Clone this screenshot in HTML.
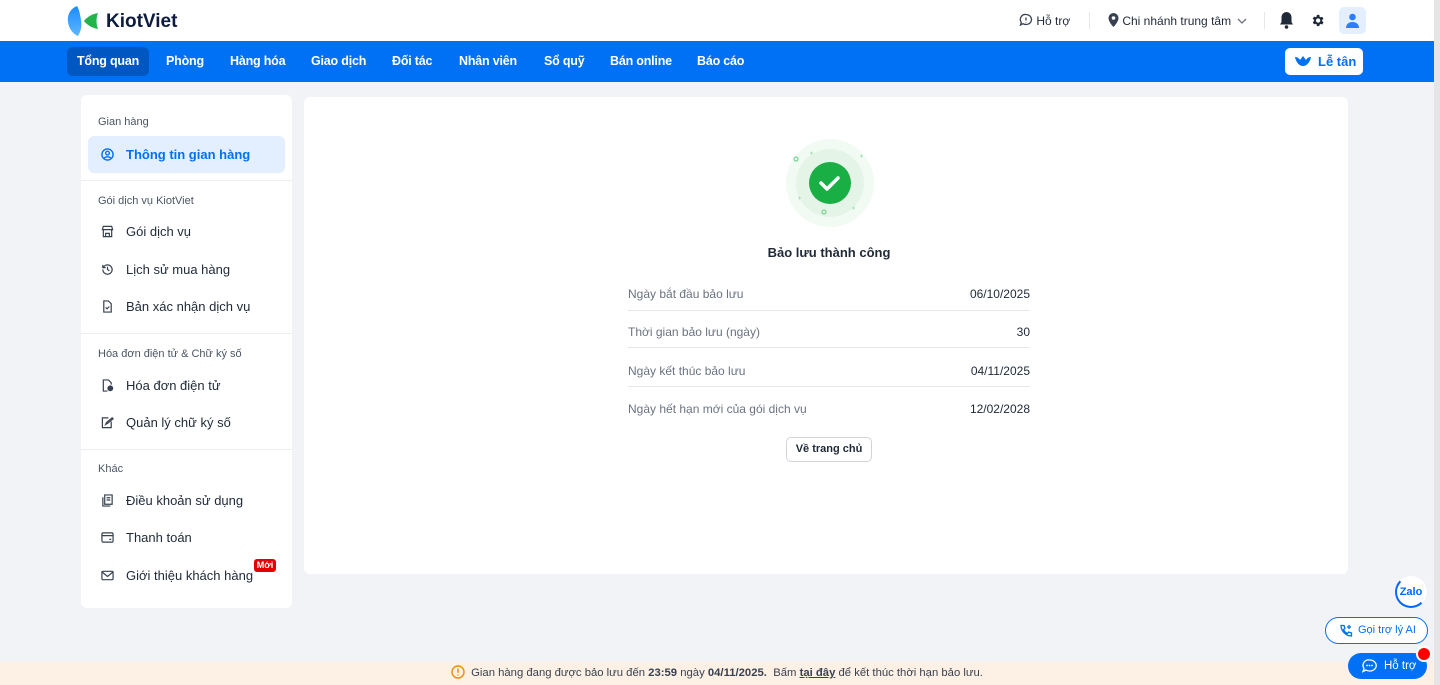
<!DOCTYPE html>
<html><head><meta charset="utf-8"><style>
*{box-sizing:border-box;margin:0;padding:0}
body{width:1440px;height:685px;overflow:hidden;background:#f2f3f6;font-family:"Liberation Sans",sans-serif;position:relative;color:#1f2937}
.top{position:absolute;left:0;top:0;width:1434px;height:41px;background:#fff}
.nav{position:absolute;left:0;top:41px;width:1434px;height:41px;background:#0070f4}
.nav a{position:absolute;top:6px;height:29px;line-height:29px;color:#fff;font-weight:bold;font-size:12.5px;padding:0 10px;border-radius:6px;letter-spacing:-0.2px}
.sb{position:absolute;right:0;top:0;width:6px;height:685px;background:#e5e5e5}
.side{position:absolute;left:81px;top:95px;width:211px;height:513px;background:#fff;border-radius:6px}
.sec{position:absolute;left:17px;font-size:11px;color:#4b5563}
.it{position:absolute;left:7px;width:197px;height:37px;line-height:37px;font-size:13px;color:#1f2937;padding-left:38px}
.it svg{position:absolute;left:13px;top:12px}
.hr{position:absolute;left:0;width:211px;height:1px;background:#eceef1}
.main{position:absolute;left:304px;top:97px;width:1044px;height:477px;background:#fff;border-radius:6px}
.row{position:absolute;left:324px;width:402px;font-size:12px;color:#6b7280}
.row b{position:absolute;right:0;top:0;font-weight:normal;color:#1f2937}
.ln{position:absolute;left:324px;width:402px;height:1px;background:#e5e7eb}
</style></head><body>
<div class="top">
 <svg style="position:absolute;left:67px;top:6px" width="32" height="30" viewBox="0 0 32 30"><defs><linearGradient id="g" x1="0" y1="0" x2="0" y2="1"><stop offset="0" stop-color="#1a8cff"/><stop offset="1" stop-color="#5fb6ff"/></linearGradient></defs><path d="M10 0C3 3 0 9 1 16c1 7 5 12 10 14 3-5 4-10 3-16C13 8 12 3 10 0z" fill="url(#g)"/><path d="M31 7c-6 1-11 4-14 8 3 4 8 7 14 8-2-5-2-11 0-16z" fill="#22b34b"/></svg>
 <div style="position:absolute;left:106px;top:11px;font-size:19px;font-weight:bold;color:#0d1b3e">KiotViet</div>
 <div style="position:absolute;left:1019px;top:13px;font-size:12px;color:#1f2937">
  <svg width="14" height="14" viewBox="0 0 14 14" style="vertical-align:-2px"><path d="M7 1.5a5.5 5 0 1 1-3 9.2L1.5 12l.8-2.6A5 5 0 0 1 7 1.5z" fill="none" stroke="#374151" stroke-width="1.3"/><path d="M7 4.5v3M7 9v.5" stroke="#374151" stroke-width="1.3"/></svg> Hỗ trợ</div>
 <div style="position:absolute;left:1089px;top:12px;width:1px;height:17px;background:#e5e7eb"></div>
 <div style="position:absolute;left:1108px;top:13px;font-size:12px;color:#1f2937">
  <svg width="11" height="14" viewBox="0 0 11 14" style="vertical-align:-2px"><path d="M5.5 0A5 5 0 0 0 .5 5c0 4 5 9 5 9s5-5 5-9a5 5 0 0 0-5-5z" fill="#374151"/><circle cx="5.5" cy="5" r="1.8" fill="#fff"/></svg> Chi nhánh trung tâm
  <svg width="10" height="8" viewBox="0 0 10 8" style="margin-left:3px"><path d="M1 2l4 4 4-4" fill="none" stroke="#6b7280" stroke-width="1.3"/></svg></div>
 <div style="position:absolute;left:1264px;top:12px;width:1px;height:17px;background:#e5e7eb"></div>
 <svg style="position:absolute;left:1279px;top:11px" width="15" height="18" viewBox="0 0 15 18"><path d="M7.5 1a5 5 0 0 0-5 5v5l-1.5 2.5h13L12.5 11V6a5 5 0 0 0-5-5z" fill="#1f2937"/><circle cx="7.5" cy="16" r="1.8" fill="#1f2937"/></svg>
 <svg style="position:absolute;left:1310px;top:13px" width="15" height="15" viewBox="0 0 24 24"><path fill="#1f2937" d="M19.4 13a7.5 7.5 0 0 0 0-2l2.1-1.6-2-3.5-2.5 1a7.6 7.6 0 0 0-1.7-1L15 3h-4l-.4 2.7a7.6 7.6 0 0 0-1.7 1l-2.5-1-2 3.5L6.5 11a7.5 7.5 0 0 0 0 2l-2.1 1.6 2 3.5 2.5-1a7.6 7.6 0 0 0 1.7 1L11 21h4l.4-2.7a7.6 7.6 0 0 0 1.7-1l2.5 1 2-3.5zM13 15.5a3.5 3.5 0 1 1 0-7 3.5 3.5 0 0 1 0 7z"/></svg>
 <div style="position:absolute;left:1339px;top:7px;width:27px;height:27px;background:#e3efff;border-radius:5px"><svg style="position:absolute;left:7px;top:6px" width="13" height="15" viewBox="0 0 13 15"><circle cx="6.5" cy="4" r="3.3" fill="#2b7fff"/><path d="M0 15c0-4 3-6 6.5-6S13 11 13 15z" fill="#2b7fff"/></svg></div>
</div>
<div class="nav">
 <a style="left:67px;width:82px;text-align:center;padding:0;background:#0057c2">Tổng quan</a>
 <a style="left:156px">Phòng</a>
 <a style="left:220px">Hàng hóa</a>
 <a style="left:301px">Giao dịch</a>
 <a style="left:382px">Đối tác</a>
 <a style="left:449px">Nhân viên</a>
 <a style="left:534px">Sổ quỹ</a>
 <a style="left:600px">Bán online</a>
 <a style="left:687px">Báo cáo</a>
 <div style="position:absolute;left:1285px;top:7px;width:78px;height:27px;background:#fff;border-radius:5px;color:#0070f4;font-weight:bold;font-size:13px;line-height:27px;padding-left:33px"><svg style="position:absolute;left:10px;top:7px" width="16" height="12" viewBox="0 0 16 12"><path d="M0 2c2 0 4 1 5 3L8 1l3 4c1-2 3-3 5-3-1 5-4 9-8 9S1 7 0 2z" fill="#0070f4"/></svg>Lễ tân</div>
</div>
<div class="sb"></div>

<div class="side">
 <div class="sec" style="top:21px">Gian hàng</div>
 <div class="it" style="top:41px;background:#e3efff;border-radius:6px;color:#0070f4;font-weight:bold"><svg width="13" height="13" viewBox="0 0 14 14"><circle cx="7" cy="7" r="6" fill="none" stroke="#0070f4" stroke-width="1.5"/><circle cx="7" cy="5.5" r="2" fill="none" stroke="#0070f4" stroke-width="1.4"/><path d="M3.5 11c1-2 6-2 7 0" fill="none" stroke="#0070f4" stroke-width="1.4"/></svg>Thông tin gian hàng</div>
 <div class="hr" style="top:85px"></div>
 <div class="sec" style="top:100px">Gói dịch vụ KiotViet</div>
 <div class="it" style="top:118px"><svg width="13" height="13" viewBox="0 0 14 14" fill="none" stroke="#374151" stroke-width="1.3"><path d="M1.5 5h11l-1-3.5h-9zM2.5 5v7.5h9V5M5 12.5V9h4v3.5"/></svg>Gói dịch vụ</div>
 <div class="it" style="top:156px"><svg width="13" height="13" viewBox="0 0 14 14" fill="none" stroke="#374151" stroke-width="1.3"><path d="M2 7a5 5 0 1 0 1.5-3.5L2 5M2 2v3h3M7 4v3l2 1.5"/></svg>Lịch sử mua hàng</div>
 <div class="it" style="top:193px"><svg width="13" height="13" viewBox="0 0 14 14" fill="none" stroke="#374151" stroke-width="1.3"><path d="M3 1h5l3 3v9H3zM5 8l1.5 1.5L9 7"/></svg>Bản xác nhận dịch vụ</div>
 <div class="hr" style="top:238px"></div>
 <div class="sec" style="top:253px">Hóa đơn điện tử &amp; Chữ ký số</div>
 <div class="it" style="top:272px"><svg width="13" height="13" viewBox="0 0 14 14" fill="none" stroke="#374151" stroke-width="1.3"><path d="M7 13H2.5V1H8l3 3v2"/><circle cx="10" cy="10" r="2.5" fill="#374151"/></svg>Hóa đơn điện tử</div>
 <div class="it" style="top:309px"><svg width="13" height="13" viewBox="0 0 14 14" fill="none" stroke="#374151" stroke-width="1.3"><path d="M11 6v6.5H1.5V2H8M5 9l1-2 6-5 1 1-6 5z"/></svg>Quản lý chữ ký số</div>
 <div class="hr" style="top:354px"></div>
 <div class="sec" style="top:368px">Khác</div>
 <div class="it" style="top:387px"><svg width="13" height="13" viewBox="0 0 14 14" fill="none" stroke="#374151" stroke-width="1.3"><path d="M4 1h8v10H4zM2 3.5V13h8M6 4h4M6 6.5h4"/></svg>Điều khoản sử dụng</div>
 <div class="it" style="top:424px"><svg width="13" height="13" viewBox="0 0 14 14" fill="none" stroke="#374151" stroke-width="1.3"><rect x="1" y="2" width="12" height="10" rx="1.5"/><path d="M1 5h12M9 9h2"/></svg>Thanh toán</div>
 <div class="it" style="top:462px"><svg width="13" height="13" viewBox="0 0 14 14" fill="none" stroke="#374151" stroke-width="1.3"><rect x="1" y="2.5" width="12" height="9" rx="1"/><path d="M1.5 3.5L7 8l5.5-4.5"/></svg>Giới thiệu khách hàng</div>
 <div style="position:absolute;left:173px;top:464px;width:22px;height:13px;background:#e60000;border-radius:3px;color:#fff;font-size:9px;font-weight:bold;text-align:center;line-height:13px">Mới</div>
</div>

<div class="main">
 <svg style="position:absolute;left:480px;top:40px" width="92" height="92" viewBox="0 0 92 92">
  <circle cx="46" cy="46" r="44" fill="#f1faf3"/><circle cx="46" cy="46" r="34" fill="#e4f5e8"/><circle cx="46" cy="46" r="21" fill="#1aaf44"/>
  <path d="M37 46l6 6 11-11" fill="none" stroke="#fff" stroke-width="3.5" stroke-linecap="round" stroke-linejoin="round"/>
  <circle cx="12" cy="22" r="2" fill="none" stroke="#7bd391" stroke-width="1.2"/><circle cx="40" cy="75" r="2" fill="none" stroke="#7bd391" stroke-width="1.2"/>
  <path d="M26 16h3M27.5 14.5v3M76 19h3M77.5 17.5v3M14 61h3M15.5 59.5v3M68 71h3M69.5 69.5v3" stroke="#a9e2b8" stroke-width="1"/>
 </svg>
 <div style="position:absolute;left:0;width:1050px;top:148px;text-align:center;font-weight:bold;font-size:13px;color:#1f2937">Bảo lưu thành công</div>
 <div class="row" style="top:190px">Ngày bắt đầu bảo lưu<b>06/10/2025</b></div>
 <div class="ln" style="top:213px"></div>
 <div class="row" style="top:228px">Thời gian bảo lưu (ngày)<b>30</b></div>
 <div class="ln" style="top:250px"></div>
 <div class="row" style="top:267px">Ngày kết thúc bảo lưu<b>04/11/2025</b></div>
 <div class="ln" style="top:289px"></div>
 <div class="row" style="top:305px">Ngày hết hạn mới của gói dịch vụ<b>12/02/2028</b></div>
 <div style="position:absolute;left:482px;top:340px;width:86px;height:25px;border:1px solid #d1d5db;border-radius:5px;font-size:11px;font-weight:bold;text-align:center;line-height:23px;color:#1f2937">Về trang chủ</div>
</div>

<div style="position:absolute;left:1395px;top:576px;width:32px;height:32px;border-radius:50%;background:#fff;border:2px solid #0068ff;border-right-color:#fff;border-top-color:#fff;color:#0068ff;font-weight:bold;font-size:11px;text-align:center;line-height:28px">Zalo</div>
<div style="position:absolute;left:1325px;top:617px;width:103px;height:27px;border:1px solid #0070f4;border-radius:14px;background:#fff;color:#0070f4;font-size:11px;line-height:25px;padding-left:32px"><svg style="position:absolute;left:13px;top:6px" width="14" height="14" viewBox="0 0 14 14" fill="none" stroke="#0070f4" stroke-width="1.3"><path d="M2 1.5h3l1 3-1.5 1a7 7 0 0 0 4 4l1-1.5 3 1v3C7 12 2 7 2 1.5zM10 1v4M8 3h4"/></svg>Gọi trợ lý AI</div>
<div style="position:absolute;left:0;top:662px;width:1434px;height:23px;background:#fdf1e5;font-size:11.3px;color:#374151;text-align:center;line-height:23px">
 <svg width="14" height="14" viewBox="0 0 14 14" style="vertical-align:-3px;margin-right:6px"><circle cx="7" cy="7" r="6" fill="none" stroke="#f08c00" stroke-width="1.4"/><path d="M7 3.5v4.3M7 9.5v1" stroke="#f08c00" stroke-width="1.5"/></svg>Gian hàng đang được bảo lưu đến <b>23:59</b> ngày <b>04/11/2025.</b>&nbsp; Bấm <b style="text-decoration:underline">tại đây</b> để kết thúc thời hạn bảo lưu.</div>
<div style="position:absolute;left:1348px;top:653px;width:79px;height:26px;background:#0070f4;border-radius:13px;color:#fff;font-size:11.5px;line-height:26px;padding-left:36px"><svg style="position:absolute;left:14px;top:6px" width="15" height="14" viewBox="0 0 15 14"><path d="M7.5 1a6.5 5.5 0 1 1-3.5 10L1 12.5l1-3A5.5 5.5 0 0 1 7.5 1z" fill="none" stroke="#fff" stroke-width="1.3"/><circle cx="5" cy="6.5" r=".9" fill="#fff"/><circle cx="7.5" cy="6.5" r=".9" fill="#fff"/><circle cx="10" cy="6.5" r=".9" fill="#fff"/></svg>Hỗ trợ</div>
<div style="position:absolute;left:1416px;top:646px;width:16px;height:16px;border-radius:50%;background:#f00;border:2px solid #fff"></div>
</body></html>
